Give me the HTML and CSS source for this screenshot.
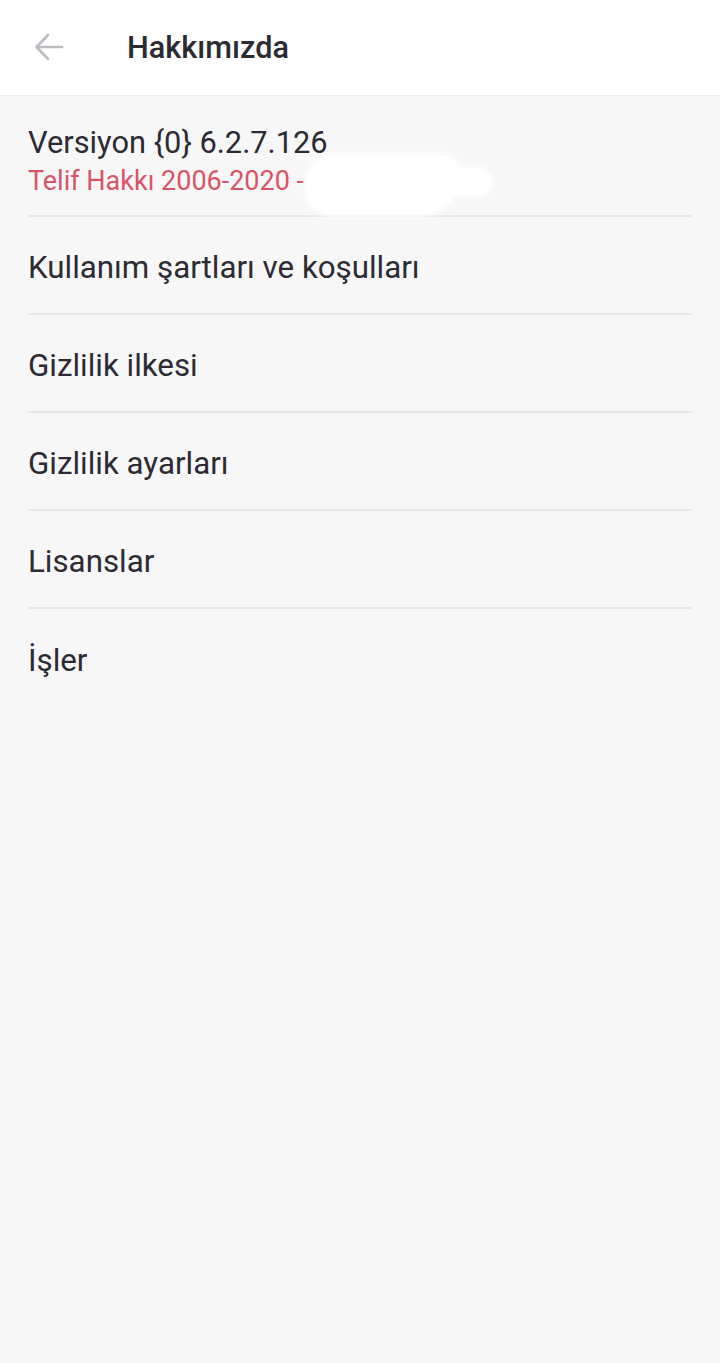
FILE: index.html
```html
<!DOCTYPE html>
<html lang="tr">
<head>
<meta charset="utf-8">
<title>Hakkımızda</title>
<link rel="stylesheet" href="styles.css">
</head>
<body>
<header class="topbar">
  <svg class="back" width="30" height="28" viewBox="0 0 30 28" aria-hidden="true">
    <path d="M28 14 H3 M14 2 L2.5 14 L14 26" fill="none" stroke="#bcbcc2" stroke-width="2.6" stroke-linecap="round" stroke-linejoin="round"/>
  </svg>
  <h1 class="title">Hakkımızda</h1>
</header>
<main class="list">
  <div class="item item-version">
    <div class="version">Versiyon {0} 6.2.7.126</div>
    <div class="copyright">Telif Hakkı 2006-2020 - <span class="mask"></span><span class="mask mask-b"></span></div>
  </div>
  <div class="item">Kullanım şartları ve koşulları</div>
  <div class="item">Gizlilik ilkesi</div>
  <div class="item">Gizlilik ayarları</div>
  <div class="item">Lisanslar</div>
  <div class="item item-last">İşler</div>
</main>
</body>
</html>
```
FILE: styles.css
```css
html, body {
  margin: 0;
  padding: 0;
}
body {
  width: 720px;
  min-height: 1363px;
  background: #f7f7f7;
  font-family: Roboto, "Noto Sans", sans-serif;
  color: #2c2b33;
}
.topbar {
  height: 95px;
  background: #ffffff;
  border-bottom: 1px solid #f0f0f0;
  display: flex;
  align-items: center;
  padding-left: 34px;
}
.back {
  display: block;
  margin-top: -2px;
}
.title {
  margin: 0 0 0 63px;
  font-size: 30.7px;
  font-weight: 500;
  color: #2c2b33;
}
.list {
  margin: 0 28px;
}
.item {
  font-size: 31.3px;
  padding-top: 4px;
  box-sizing: border-box;
  height: 98px;
  display: flex;
  align-items: center;
  border-bottom: 2px solid #e8e8e8;
}
.item-version {
  height: 121px;
  padding-top: 12px;
  padding-bottom: 0;
  flex-direction: column;
  align-items: flex-start;
  justify-content: center;
}
.item-last {
  border-bottom: none;
}
.version {
  font-size: 30.8px;
  line-height: 38px;
}
.copyright {
  font-size: 27px;
  line-height: 38px;
  color: #d95468;
  position: relative;
}
.mask {
  position: absolute;
  left: 280px;
  top: -6px;
  width: 150px;
  height: 58px;
  background: #ffffff;
  border-radius: 30px 20px 40px 25px;
  box-shadow: 0 0 5px 3px #ffffff;
}
.mask-b {
  left: 400px;
  top: 8px;
  width: 62px;
  height: 24px;
  border-radius: 12px;
}
```
